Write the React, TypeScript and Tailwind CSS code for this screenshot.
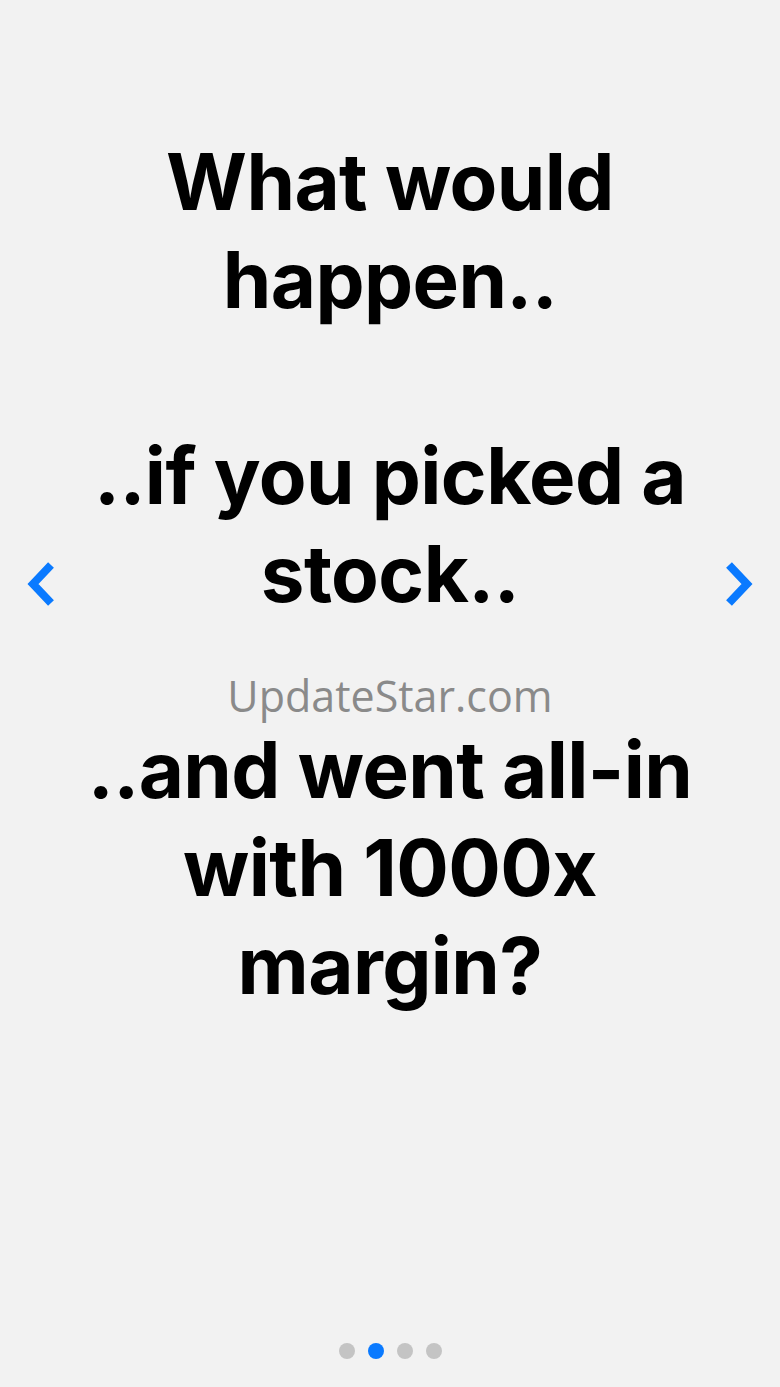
import React from 'react';

const lines: string[] = [
  'What would',
  'happen..',
  '',
  '..if you picked a',
  'stock..',
  '',
  '..and went all-in',
  'with 1000x',
  'margin?',
];

function Chevron({ dir }: { dir: 'left' | 'right' }) {
  return (
    <svg width="30" height="46" viewBox="0 0 30 46" fill="none">
      <path
        d={dir === 'left' ? 'M25 4 L7 23 L25 42' : 'M5 4 L23 23 L5 42'}
        stroke="#0a7aff"
        strokeWidth="8"
        strokeLinejoin="miter"
      />
    </svg>
  );
}

export default function App() {
  const dots = [0, 1, 2, 3];
  return (
    <div className="relative w-[780px] h-[1387px] bg-[#f2f2f2] overflow-hidden flex flex-col" style={{ fontFamily: 'Inter, "Noto Sans", sans-serif' }}>
      <div className="pt-[133px] px-[26px] flex items-center justify-between">
        <button className="mt-[20px]">
          <Chevron dir="left" />
        </button>
        <div className="flex flex-col items-center">
          {lines.map((l, i) => (
            <div key={i} className="h-[98px] leading-[98px] text-[78px] font-bold text-black tracking-[-0.6px] whitespace-nowrap">
              {l || '\u00a0'}
            </div>
          ))}
        </div>
        <button className="mt-[20px]">
          <Chevron dir="right" />
        </button>
      </div>

      {/* watermark */}
      <div className="absolute left-0 right-0 top-[669px] text-center text-[43px] leading-[54px] text-[#8a8a8a]" style={{ fontFamily: '"Open Sans", "Noto Sans", sans-serif' }}>
        UpdateStar.com
      </div>

      <div className="mt-auto pb-[28px] flex justify-center gap-[13px]">
        {dots.map((d) => (
          <span key={d} className={`w-4 h-4 rounded-full ${d === 1 ? 'bg-[#0a7aff]' : 'bg-[#c4c4c4]'}`} />
        ))}
      </div>
    </div>
  );
}
